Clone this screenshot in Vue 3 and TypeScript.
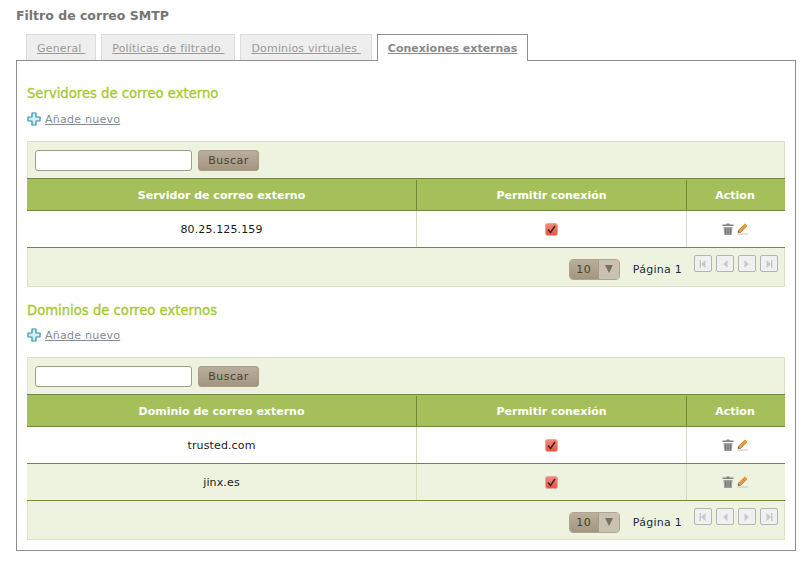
<script setup lang="ts">
interface Section { title: string; column: string; rows: string[] }
const sections: Section[] = [
  { title: 'Servidores de correo externo', column: 'Servidor de correo externo', rows: ['80.25.125.159'] },
  { title: 'Dominios de correo externos', column: 'Dominio de correo externo', rows: ['trusted.com', 'jinx.es'] },
]
const tabs = ['General ', 'Políticas de filtrado ', 'Dominios virtuales ']
const pagers = ['first', 'prev', 'next', 'last']
</script>

<template>
  <div class="page">
    <h1 class="title">Filtro de correo SMTP</h1>
    <div class="tabs">
      <a v-for="t in tabs" :key="t" class="tab">{{ t }}</a>
      <a class="tab active">Conexiones externas</a>
    </div>
    <div class="panel">
      <section v-for="s in sections" :key="s.title" class="section">
        <h2 class="heading">{{ s.title }}</h2>
        <div class="add">
          <svg width="14" height="14" viewBox="0 0 14 14">
            <path d="M5 1h4v4h4v4H9v4H5V9H1V5h4z" fill="#d4f0f5" stroke="#2f8fa8" stroke-width="1.2" stroke-linejoin="round" />
          </svg>
          <a class="add-link">Añade nuevo</a>
        </div>
        <div class="box">
          <div class="search">
            <input class="input" type="text" />
            <button class="btn" type="button">Buscar</button>
          </div>
          <div class="row head">
            <div class="cell c1">{{ s.column }}</div>
            <div class="cell c2">Permitir conexión</div>
            <div class="cell c3">Action</div>
          </div>
          <div v-for="(r, i) in s.rows" :key="r" class="row body" :class="{ odd: i % 2 === 1 }">
            <div class="cell c1">{{ r }}</div>
            <div class="cell c2">
              <svg width="13" height="13" viewBox="0 0 13 13">
                <defs>
                  <linearGradient :id="'chk' + s.column.length + i" x1="0" y1="0" x2="0" y2="1">
                    <stop offset="0" stop-color="#f98a7c" />
                    <stop offset="1" stop-color="#ee4e40" />
                  </linearGradient>
                </defs>
                <rect x="0.5" y="0.5" width="12" height="12" rx="2" :fill="'url(#chk' + s.column.length + i + ')'" stroke="#e8a898" />
                <path d="M3 6.5l2.5 3L10 3" fill="none" stroke="#2b2b2b" stroke-width="1.5" />
              </svg>
            </div>
            <div class="cell c3 actions">
              <svg width="12" height="12" viewBox="0 0 12 12">
                <path d="M4.5 0.5h3v1H11.5v1.5H0.5V1.5h4z" fill="#808080" />
                <path d="M1.5 4h9l-.7 8H2.2z" fill="#a0a0a0" />
                <path d="M3.7 5v6M6 5v6M8.3 5v6" stroke="#686868" stroke-width="0.9" />
              </svg>
              <svg width="11" height="12" viewBox="0 0 11 12">
                <path d="M7.8 1L10 3.2 3.5 9.5H1.2V7.4z" fill="#e09a50" stroke="#a86a20" stroke-width="0.6" />
                <path d="M7.8 1L10 3.2 8.8 4.4 6.6 2.2z" fill="#ff9a10" />
                <path d="M1.2 9.5V7.9l1.6 1.6z" fill="#5a3a18" />
                <path d="M0 11h11" stroke="#c4c4c4" stroke-width="1" />
              </svg>
            </div>
          </div>
          <div class="foot">
            <div class="select">
              <span class="sel-val">10</span>
              <span class="sel-arrow"><i class="tri"></i></span>
            </div>
            <span class="page-label">Página 1</span>
            <div class="pager">
              <span v-for="p in pagers" :key="p" class="pg">
                <svg width="10" height="10" viewBox="0 0 10 10">
                  <rect v-if="p === 'first'" x="1.5" y="1" width="1.5" height="8" fill="#c9c9c9" />
                  <path v-if="p === 'first' || p === 'prev'" d="M7.5 1v8L3 5z" fill="#c9c9c9" />
                  <path v-if="p === 'next' || p === 'last'" d="M2.5 1v8L7 5z" fill="#c9c9c9" />
                  <rect v-if="p === 'last'" x="7" y="1" width="1.5" height="8" fill="#c9c9c9" />
                </svg>
              </span>
            </div>
          </div>
        </div>
      </section>
    </div>
  </div>
</template>

<style>
html, body { background: #fff; }
</style>

<style scoped>
.page {
  width: 808px;
  height: 564px;
  box-sizing: border-box;
  padding: 8px 12px 0 16px;
  font-family: "DejaVu Sans", Verdana, sans-serif;
  overflow: hidden;
}
.title {
  margin: 0;
  font-size: 12.5px;
  line-height: 15px;
  font-weight: bold;
  color: #757575;
  height: 26px;
}
.tabs {
  display: flex;
  padding-left: 10px;
  gap: 5px;
  height: 26px;
}
.tab {
  box-sizing: border-box;
  height: 26px;
  padding: 0 10px;
  border: 1px solid #dcdcdc;
  border-bottom: none;
  background: #eeeeee;
  color: #9a9a9a;
  font-size: 11px;
  line-height: 27px;
  letter-spacing: 0.17px;
  text-decoration: underline;
  white-space: pre;
}
.tab.active {
  position: relative;
  height: 27px;
  padding: 0 10px;
  background: #fff;
  border: 1px solid #8e8e8e;
  border-bottom: none;
  color: #8a8a8a;
  font-weight: bold;
  letter-spacing: 0;
  z-index: 1;
}
.panel {
  box-sizing: border-box;
  width: 780px;
  height: 491px;
  border: 1px solid #8e8e8e;
  padding: 23px 10px 0;
}
.section + .section { margin-top: 14px; }
.section + .section .add { margin-top: 6px; }
.heading {
  margin: 0;
  font-size: 13.2px;
  line-height: 20px;
  font-weight: normal;
  color: #a5c92d;
  -webkit-text-stroke: 0.3px #a5c92d;
}
.add {
  display: flex;
  align-items: center;
  gap: 4px;
  height: 16px;
  margin-top: 7px;
}
.add-link {
  font-size: 11px;
  letter-spacing: 0.25px;
  color: #7f8c93;
  text-decoration: underline;
}
.box {
  box-sizing: border-box;
  width: 758px;
  margin-top: 14px;
  background: #edf3de;
  border: 1px solid #dbe0c6;
}
.search {
  display: flex;
  align-items: center;
  height: 36px;
  padding-left: 7px;
  gap: 6px;
}
.input {
  box-sizing: border-box;
  width: 157px;
  height: 21px;
  border: 1px solid #a89a84;
  border-radius: 3px;
  background: #fff;
  padding: 0;
}
.btn {
  box-sizing: border-box;
  width: 61px;
  height: 21px;
  padding: 0;
  border: 1px solid #a89a84;
  border-radius: 3px;
  background: linear-gradient(#baaf9d, #a29680);
  color: #4a3f33;
  font-family: inherit;
  font-size: 11px;
  letter-spacing: 0.5px;
}
.row {
  display: flex;
  margin: 0 -1px;
  border-bottom: 1px solid #6b8a3a;
}
.cell {
  box-sizing: border-box;
  display: flex;
  align-items: center;
  justify-content: center;
  font-size: 11px;
}
.c1 { width: 390px; border-right: 1px solid #d5dcbc; }
.c2 { width: 270px; border-right: 1px solid #d5dcbc; }
.c3 { width: 98px; padding-right: 2px; }
.head {
  height: 33px;
  padding-top: 1px;
  background: #a5bf5b;
  border-top: 1px solid #6b8a3a;
  box-sizing: border-box;
}
.head .cell {
  color: #fff;
  font-weight: bold;
  border-right-color: #6b8a3a;
}
.body {
  height: 37px;
  box-sizing: border-box;
  background: #fff;
}
.body.odd { background: #edf3de; }
.body .cell { color: #1a1a1a; letter-spacing: 0.13px; }
.actions { gap: 3px; }
.foot {
  box-sizing: border-box;
  display: flex;
  align-items: center;
  justify-content: flex-end;
  height: 38px;
  padding: 4px 6px 0 0;
}
.select {
  box-sizing: border-box;
  display: flex;
  width: 51px;
  height: 21px;
  border: 1px solid #b0a48f;
  border-radius: 4px;
  overflow: hidden;
}
.sel-val {
  width: 28px;
  text-align: center;
  font-size: 11px;
  line-height: 19px;
  letter-spacing: 0.5px;
  color: #4a3f33;
  background: linear-gradient(#baaf9d, #a29680);
  border-right: 1px solid #a89a84;
}
.sel-arrow {
  flex: 1;
  display: flex;
  align-items: center;
  justify-content: center;
  background: #c9c2b2;
}
.tri {
  display: block;
  width: 0;
  height: 0;
  border-left: 4px solid transparent;
  border-right: 4px solid transparent;
  border-top: 8px solid #77705f;
}
.page-label {
  margin-left: 13px;
  font-size: 11px;
  letter-spacing: 0.25px;
  color: #1a2a3a;
}
.pager {
  display: flex;
  gap: 4px;
  margin-left: 12px;
  margin-top: -11px;
}
.pg {
  box-sizing: border-box;
  width: 18px;
  height: 17px;
  display: flex;
  align-items: center;
  justify-content: center;
  border: 1px solid #b4b4b4;
  border-radius: 2px;
  background: #f0f0f0;
}
</style>
